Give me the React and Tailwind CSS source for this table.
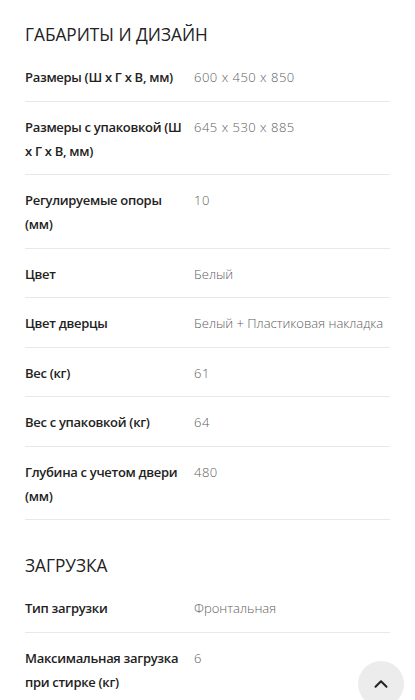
import { ChevronUp } from 'lucide-react';

const sections = [
  {
    title: 'ГАБАРИТЫ И ДИЗАЙН',
    rows: [
      ['Размеры (Ш х Г х В, мм)', '600 x 450 x 850'],
      ['Размеры с упаковкой (Ш х Г х В, мм)', '645 x 530 x 885'],
      ['Регулируемые опоры (мм)', '10'],
      ['Цвет', 'Белый'],
      ['Цвет дверцы', 'Белый + Пластиковая накладка'],
      ['Вес (кг)', '61'],
      ['Вес с упаковкой (кг)', '64'],
      ['Глубина с учетом двери (мм)', '480'],
    ],
  },
  {
    title: 'ЗАГРУЗКА',
    rows: [
      ['Тип загрузки', 'Фронтальная'],
      ['Максимальная загрузка при стирке (кг)', '6'],
    ],
  },
];

// digits in the original font run a bit wider than Open Sans
const isNumber = (v) => /^[\d x]+$/.test(v);

export default function App() {
  return (
    <div className="relative h-[700px] overflow-hidden bg-white font-['Open_Sans',sans-serif] text-[#222]">
      <div className="px-[25px] pt-[21px]">
        {sections.map((section, i) => (
          <div key={section.title} className={i > 0 ? 'mt-[32px]' : ''}>
            <h2 className="text-[17.25px] leading-[28px] text-[#222]">{section.title}</h2>
            <div className="mt-[3px]">
              {section.rows.map(([label, value]) => (
                <div key={label} className="flex gap-[9px] border-b border-[#e8e8e8] pt-[13px] pb-[11.5px] text-[13px] leading-[24px]">
                  <div className="w-[160px] shrink-0 font-semibold tracking-[-0.3px]">{label}</div>
                  <div className={isNumber(value) ? 'font-light tracking-[0.5px] text-[#606060]' : 'font-light text-[#606060]'}>
                    {value}
                  </div>
                </div>
              ))}
            </div>
          </div>
        ))}
      </div>
      <button className="absolute left-[358px] top-[661px] flex h-[46px] w-[46px] items-center justify-center rounded-full bg-[#ececec] text-[#222]">
        <ChevronUp size={22} strokeWidth={2.2} />
      </button>
    </div>
  );
}
